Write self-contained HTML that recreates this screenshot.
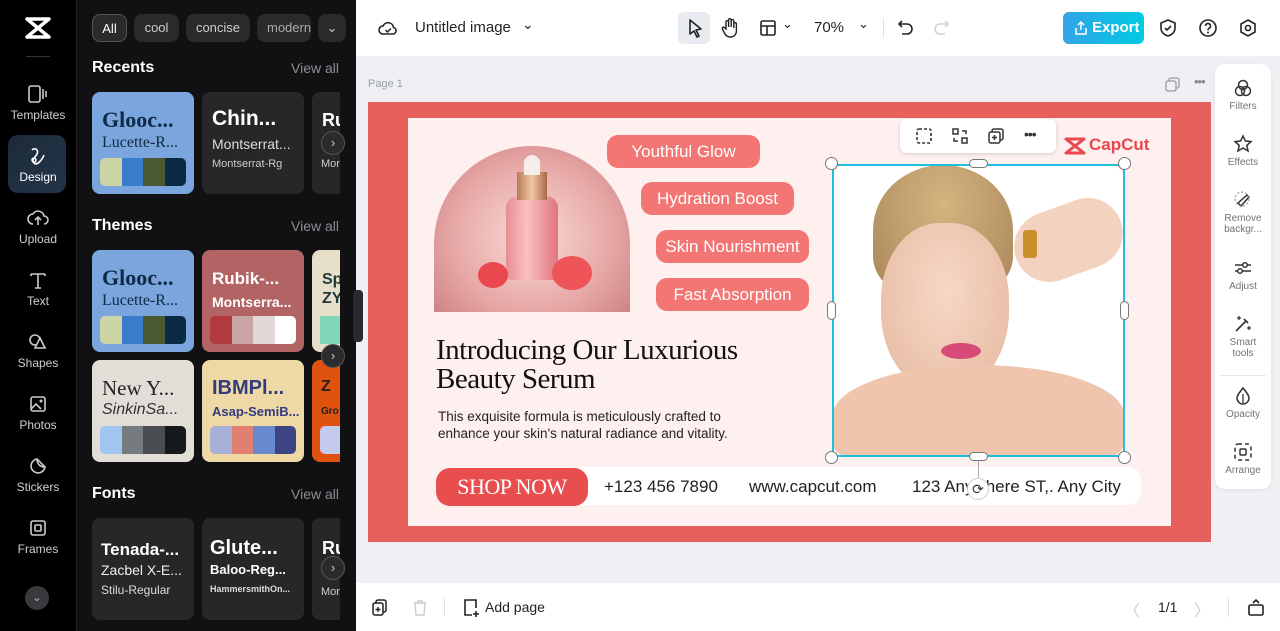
<!DOCTYPE html>
<html><head><meta charset="utf-8"><style>
*{box-sizing:border-box;margin:0;padding:0}
body{width:1280px;height:631px;overflow:hidden;font-family:"Liberation Sans",sans-serif;background:#eef0f3;position:relative}
.abs{position:absolute}
.nav{left:0;top:0;width:76px;height:631px;background:#000}
.navi{position:absolute;left:0;width:76px;text-align:center;color:#cfcfd2;font-size:12px}
.navi svg{display:block;margin:0 auto 4px}
.panel{left:76px;top:0;width:280px;height:631px;background:#111113;border-left:1px solid #222}
.chip{position:absolute;top:14px;height:28px;border-radius:8px;background:#2a2a2d;color:#cfcfd2;font-size:13px;line-height:28px;text-align:center}
.h{position:absolute;left:92px;color:#fff;font-weight:bold;font-size:16px}
.va{position:absolute;left:291px;color:#8d8d92;font-size:14px}
.card{position:absolute;width:102px;height:102px;border-radius:8px;overflow:hidden}
.pal{position:absolute;left:8px;top:66px;width:86px;height:28px;border-radius:5px;overflow:hidden;display:flex}
.pal i{flex:1}
.arr{position:absolute;left:321px;width:24px;height:24px;border-radius:50%;background:#2b2b2e;border:1px solid #555;color:#ccc;font-size:13px;text-align:center;line-height:22px}
.top{left:356px;top:0;width:924px;height:56px;background:#fff}
.bot{left:356px;top:583px;width:924px;height:48px;background:#fff}
.tag{position:absolute;height:33px;border-radius:11px;background:#f37574;color:#fff;font-size:17px;line-height:33px;text-align:center}
.rt{position:absolute;left:0;width:56px;text-align:center;color:#70737a;font-size:10px;line-height:11px}
.rt svg{display:block;margin:0 auto 3px}
.h1{font-family:"Liberation Serif",serif}
</style></head><body>
<div class="abs nav">
 <svg class="abs" style="left:24px;top:16px" width="28" height="24" viewBox="0 0 28 24"><path d="M3 3h22l-11 9zM3 21h22l-11-9z" fill="none" stroke="#fff" stroke-width="3.5" stroke-linejoin="round"/></svg>
 <div class="abs" style="left:26px;top:56px;width:24px;height:1px;background:#333"></div>
 <div class="navi" style="top:84px"><svg width="22" height="20" viewBox="0 0 22 20"><rect x="2" y="2" width="11" height="16" rx="2" fill="none" stroke="#ccc" stroke-width="1.6"/><path d="M16 5v10M19 7v6" stroke="#ccc" stroke-width="1.6"/></svg>Templates</div>
 <div class="abs" style="left:8px;top:135px;width:58px;height:58px;border-radius:10px;background:linear-gradient(135deg,#1c2a3a,#243548)"></div>
 <div class="navi" style="top:146px;color:#fff"><svg width="20" height="20" viewBox="0 0 20 20"><path d="M4 4c3-3 7 0 5 4s-6 6-3 9 8-3 10-8" fill="none" stroke="#fff" stroke-width="1.6"/><circle cx="6" cy="14" r="2" fill="none" stroke="#fff" stroke-width="1.5"/></svg>Design</div>
 <div class="navi" style="top:208px"><svg width="22" height="20" viewBox="0 0 22 20"><path d="M6 16a5 5 0 010-10 6 6 0 0111 2 4 4 0 010 8M11 17v-7M8 12l3-3 3 3" fill="none" stroke="#ccc" stroke-width="1.6"/></svg>Upload</div>
 <div class="navi" style="top:270px"><svg width="20" height="20" viewBox="0 0 20 20"><path d="M3 4h14M10 4v14M3 4v2M17 4v2M7 18h6" fill="none" stroke="#ccc" stroke-width="1.6"/></svg>Text</div>
 <div class="navi" style="top:332px"><svg width="22" height="20" viewBox="0 0 22 20"><circle cx="8" cy="8" r="5" fill="none" stroke="#ccc" stroke-width="1.6"/><path d="M13 6l5 10H8z" fill="#000" stroke="#ccc" stroke-width="1.6"/></svg>Shapes</div>
 <div class="navi" style="top:394px"><svg width="20" height="20" viewBox="0 0 20 20"><rect x="3" y="3" width="14" height="14" rx="2" fill="none" stroke="#ccc" stroke-width="1.6"/><path d="M3 15l5-5 5 5" fill="none" stroke="#ccc" stroke-width="1.6"/><circle cx="13" cy="7" r="1.5" fill="#ccc"/></svg>Photos</div>
 <div class="navi" style="top:456px"><svg width="20" height="20" viewBox="0 0 20 20"><path d="M17 11a7 7 0 11-8-8c0 5 3 8 8 8zM9 3l8 8" fill="none" stroke="#ccc" stroke-width="1.6"/></svg>Stickers</div>
 <div class="navi" style="top:518px"><svg width="20" height="20" viewBox="0 0 20 20"><rect x="3" y="3" width="14" height="14" rx="2" fill="none" stroke="#ccc" stroke-width="1.6"/><rect x="7" y="7" width="6" height="6" rx="1" fill="none" stroke="#ccc" stroke-width="1.6"/></svg>Frames</div>
 <div class="abs" style="left:25px;top:586px;width:24px;height:24px;border-radius:50%;background:#3a3a3e;color:#bbb;font-size:11px;text-align:center;line-height:24px">⌄</div>
</div>
<div class="abs panel"></div>
<div class="chip" style="left:92px;width:35px;border:1px solid #555;color:#fff">All</div>
<div class="chip" style="left:134px;width:45px">cool</div>
<div class="chip" style="left:186px;width:64px">concise</div>
<div class="chip" style="left:257px;width:54px;overflow:hidden;text-align:left;padding-left:10px;color:#aaa">modern</div>
<div class="chip" style="left:318px;width:28px;color:#ccc">⌄</div>
<div class="h" style="top:59px">Recents</div><div class="va" style="top:60px">View all</div>
<div class="h" style="top:217px">Themes</div><div class="va" style="top:218px">View all</div>
<div class="h" style="top:485px">Fonts</div><div class="va" style="top:486px">View all</div>
<!-- recents -->
<div class="card" style="left:92px;top:92px;background:#7aa5dd"><div class="h1" style="position:absolute;left:10px;top:15px;font-size:22px;font-weight:bold;color:#0f2a45">Glooc...</div><div class="h1" style="position:absolute;left:10px;top:42px;font-size:16px;color:#0f2a45">Lucette-R...</div><div class="pal"><i style="background:#cdd4a6"></i><i style="background:#3b7bcb"></i><i style="background:#4a5a30"></i><i style="background:#0b2a44"></i></div></div>
<div class="card" style="left:202px;top:92px;background:#27272a"><div style="position:absolute;left:10px;top:15px;font-size:21px;font-weight:bold;color:#fff">Chin...</div><div style="position:absolute;left:10px;top:44px;font-size:14px;color:#ddd">Montserrat...</div><div style="position:absolute;left:10px;top:66px;font-size:11px;color:#ccc">Montserrat-Rg</div></div>
<div class="card" style="left:312px;top:92px;width:28px;background:#27272a;border-radius:8px 0 0 8px"><div style="position:absolute;left:10px;top:18px;font-size:18px;font-weight:bold;color:#fff">Ru</div><div style="position:absolute;left:9px;top:66px;font-size:11px;color:#ccc">Mor</div></div>
<div class="arr" style="top:131px">›</div>
<!-- themes -->
<div class="card" style="left:92px;top:250px;background:#7aa5dd"><div class="h1" style="position:absolute;left:10px;top:15px;font-size:22px;font-weight:bold;color:#0f2a45">Glooc...</div><div class="h1" style="position:absolute;left:10px;top:42px;font-size:16px;color:#0f2a45">Lucette-R...</div><div class="pal"><i style="background:#cdd4a6"></i><i style="background:#3b7bcb"></i><i style="background:#4a5a30"></i><i style="background:#0b2a44"></i></div></div>
<div class="card" style="left:202px;top:250px;background:#b26464"><div style="position:absolute;left:10px;top:19px;font-size:17px;font-weight:bold;color:#fff">Rubik-...</div><div style="position:absolute;left:10px;top:44px;font-size:14px;font-weight:bold;color:#fff">Montserra...</div><div class="pal"><i style="background:#b03a3d"></i><i style="background:#c9a5a5"></i><i style="background:#e2d8d8"></i><i style="background:#fff"></i></div></div>
<div class="card" style="left:312px;top:250px;width:28px;background:#e8dfca;border-radius:8px 0 0 8px"><div style="position:absolute;left:10px;top:20px;font-size:16px;font-weight:bold;color:#1e3a3a;line-height:19px">Sp<br>ZY</div><div style="position:absolute;left:8px;top:66px;width:20px;height:28px;background:#80d8b8"></div></div>
<div class="card" style="left:92px;top:360px;background:#e2ddd7"><div class="h1" style="position:absolute;left:10px;top:16px;font-size:21px;color:#222">New Y...</div><div style="position:absolute;left:10px;top:41px;font-size:16px;font-style:italic;color:#333">SinkinSa...</div><div class="pal"><i style="background:#a0c5ef"></i><i style="background:#767b80"></i><i style="background:#4a4d52"></i><i style="background:#16181b"></i></div></div>
<div class="card" style="left:202px;top:360px;background:#eed8a6"><div style="position:absolute;left:10px;top:17px;font-size:20px;font-weight:bold;color:#323b80">IBMPl...</div><div style="position:absolute;left:10px;top:44px;font-size:13px;font-weight:bold;color:#323b80">Asap-SemiB...</div><div class="pal"><i style="background:#a9b0d8"></i><i style="background:#df8070"></i><i style="background:#6689cf"></i><i style="background:#3c4482"></i></div></div>
<div class="card" style="left:312px;top:360px;width:28px;background:#e0530f;border-radius:8px 0 0 8px"><div style="position:absolute;left:9px;top:18px;font-size:16px;font-weight:bold;color:#222">Z</div><div style="position:absolute;left:9px;top:46px;font-size:10px;font-weight:bold;color:#222">Gro</div><div style="position:absolute;left:8px;top:66px;width:20px;height:28px;background:#c5cbef;border-radius:5px 0 0 5px"></div></div>
<div class="arr" style="top:344px">›</div>
<!-- fonts -->
<div class="card" style="left:92px;top:518px;background:#27272a"><div style="position:absolute;left:9px;top:22px;font-size:17px;font-weight:bold;color:#fff">Tenada-...</div><div style="position:absolute;left:9px;top:44px;font-size:14px;color:#eee">Zacbel X-E...</div><div style="position:absolute;left:9px;top:65px;font-size:12px;color:#ddd">Stilu-Regular</div></div>
<div class="card" style="left:202px;top:518px;background:#27272a"><div style="position:absolute;left:8px;top:19px;font-size:20px;font-weight:bold;color:#fff">Glute...</div><div style="position:absolute;left:8px;top:44px;font-size:13px;font-weight:bold;color:#fff">Baloo-Reg...</div><div style="position:absolute;left:8px;top:66px;font-size:9px;font-weight:bold;color:#ddd">HammersmithOn...</div></div>
<div class="card" style="left:312px;top:518px;width:28px;background:#27272a;border-radius:8px 0 0 8px"><div style="position:absolute;left:10px;top:20px;font-size:18px;font-weight:bold;color:#fff">Ru</div><div style="position:absolute;left:9px;top:68px;font-size:11px;color:#ccc">Mor</div></div>
<div class="arr" style="top:556px">›</div>
<div class="abs" style="left:353px;top:290px;width:10px;height:52px;border-radius:4px;background:#2a2a2d"></div>
<!-- top bar -->
<div class="abs top">
 <svg class="abs" style="left:22px;top:18px" width="20" height="20" viewBox="0 0 20 20"><path d="M5 16a4 4 0 010-8 5.5 5.5 0 0110.5 1.5A3.3 3.3 0 0115 16z" fill="none" stroke="#222" stroke-width="1.6"/><path d="M7.5 12l2 2 3.5-3.5" fill="none" stroke="#222" stroke-width="1.5"/></svg>
 <div class="abs" style="left:59px;top:19px;font-size:15px;color:#222">Untitled image</div>
 <div class="abs" style="left:166px;top:16px;font-size:14px;color:#222">⌄</div>
 <div class="abs" style="left:322px;top:12px;width:32px;height:32px;border-radius:6px;background:#e8ebef"></div>
 <svg class="abs" style="left:330px;top:18px" width="18" height="20" viewBox="0 0 18 20"><path d="M4 2l11 9-5 1 3 6-2 1-3-6-4 3z" fill="none" stroke="#222" stroke-width="1.6" stroke-linejoin="round"/></svg>
 <svg class="abs" style="left:364px;top:17px" width="20" height="22" viewBox="0 0 20 22"><path d="M6 12V5a1.3 1.3 0 012.6 0v5-7a1.3 1.3 0 012.6 0v7-6a1.3 1.3 0 012.6 0v7-4a1.3 1.3 0 012.6 0v7c0 4-3 6-6 6s-5-2-6-4l-2-4a1.3 1.3 0 012.4-1z" fill="none" stroke="#222" stroke-width="1.4"/></svg>
 <svg class="abs" style="left:403px;top:19px" width="18" height="18" viewBox="0 0 18 18"><rect x="2" y="2" width="14" height="14" rx="1.5" fill="none" stroke="#222" stroke-width="1.6"/><path d="M2 7h14M8 7v9" stroke="#222" stroke-width="1.6"/></svg>
 <div class="abs" style="left:426px;top:16px;font-size:13px;color:#222">⌄</div>
 <div class="abs" style="left:458px;top:19px;font-size:15px;color:#222">70%</div>
 <div class="abs" style="left:502px;top:16px;font-size:13px;color:#222">⌄</div>
 <div class="abs" style="left:527px;top:18px;width:1px;height:20px;background:#e2e2e2"></div>
 <svg class="abs" style="left:541px;top:18px" width="18" height="20" viewBox="0 0 18 20"><path d="M5 3L2 6l3 3M2 6h8a5 5 0 010 10H5" fill="none" stroke="#222" stroke-width="1.6"/></svg>
 <svg class="abs" style="left:576px;top:18px" width="18" height="20" viewBox="0 0 18 20"><path d="M13 3l3 3-3 3M16 6H8a5 5 0 000 10h5" fill="none" stroke="#cfd2d6" stroke-width="1.6"/></svg>
 <div class="abs" style="left:707px;top:12px;width:81px;height:32px;border-radius:6px;background:linear-gradient(90deg,#34a3ea,#00cbe0);color:#fff;font-size:15px;font-weight:bold;line-height:32px;padding-left:29px">Export</div>
 <svg class="abs" style="left:718px;top:20px" width="14" height="16" viewBox="0 0 14 16"><path d="M7 10V2M4 5l3-3 3 3M2 8v6h10V8" fill="none" stroke="#fff" stroke-width="1.5"/></svg>
 <svg class="abs" style="left:802px;top:18px" width="20" height="20" viewBox="0 0 20 20"><path d="M10 2l7 3v5c0 4-3 7-7 8-4-1-7-4-7-8V5z" fill="none" stroke="#222" stroke-width="1.6"/><path d="M7 10l2 2 4-4" fill="none" stroke="#222" stroke-width="1.6"/></svg>
 <svg class="abs" style="left:842px;top:18px" width="20" height="20" viewBox="0 0 20 20"><circle cx="10" cy="10" r="8" fill="none" stroke="#222" stroke-width="1.6"/><path d="M7.5 8a2.5 2.5 0 114 2c-1 .6-1.5 1-1.5 2.2" fill="none" stroke="#222" stroke-width="1.6"/><circle cx="10" cy="14.5" r="1" fill="#222"/></svg>
 <svg class="abs" style="left:882px;top:18px" width="20" height="20" viewBox="0 0 20 20"><path d="M10 2l7 4v8l-7 4-7-4V6z" fill="none" stroke="#222" stroke-width="1.6"/><circle cx="10" cy="10" r="2.5" fill="none" stroke="#222" stroke-width="1.6"/></svg>
</div>
<div class="abs" style="left:368px;top:78px;font-size:11px;color:#9a9ea5">Page 1</div>
<svg class="abs" style="left:1165px;top:77px" width="15" height="15" viewBox="0 0 15 15"><rect x="4" y="1" width="10" height="10" rx="2" fill="none" stroke="#999" stroke-width="1.3"/><rect x="1" y="4" width="10" height="10" rx="2" fill="#eef0f3" stroke="#999" stroke-width="1.3"/></svg>
<div class="abs" style="left:1194px;top:74px;font-size:13px;color:#888;letter-spacing:-1px">•••</div>
<!-- design -->
<div class="abs" style="left:368px;top:102px;width:843px;height:440px;background:#e8605c"></div>
<div class="abs" style="left:408px;top:118px;width:763px;height:408px;background:#fdf0ee"></div>
<div class="abs" style="left:434px;top:146px;width:196px;height:166px;border-radius:98px 98px 0 0;background:radial-gradient(ellipse at 50% 55%,#f6dcd8 0%,#e8aaa8 55%,#c87a7c 100%)"></div>
<div class="abs" style="left:506px;top:196px;width:52px;height:84px;border-radius:12px 12px 6px 6px;background:linear-gradient(90deg,#e88a90,#f9c0c2 40%,#e0707a);opacity:.95"></div>
<div class="abs" style="left:517px;top:172px;width:30px;height:28px;background:linear-gradient(90deg,#b57a55,#f1c9a4,#a86845)"></div>
<div class="abs" style="left:524px;top:155px;width:16px;height:20px;border-radius:8px 8px 0 0;background:#f5ede9"></div>
<div class="abs" style="left:478px;top:262px;width:30px;height:26px;border-radius:50%;background:#e8484e"></div>
<div class="abs" style="left:552px;top:256px;width:40px;height:34px;border-radius:50%;background:#ee5458"></div>
<div class="tag" style="left:607px;top:135px;width:153px">Youthful Glow</div>
<div class="tag" style="left:641px;top:182px;width:153px">Hydration Boost</div>
<div class="tag" style="left:656px;top:230px;width:153px">Skin Nourishment</div>
<div class="tag" style="left:656px;top:278px;width:153px">Fast Absorption</div>
<div class="abs h1" style="left:436px;top:336px;font-size:29px;line-height:29px;color:#111;letter-spacing:-.5px">Introducing Our Luxurious<br>Beauty Serum</div>
<div class="abs" style="left:438px;top:408px;font-size:13.5px;line-height:17px;color:#222">This exquisite formula is meticulously crafted to<br>enhance your skin's natural radiance and vitality.</div>
<div class="abs" style="left:580px;top:467px;width:561px;height:38px;border-radius:0 12px 12px 0;background:#fff"></div>
<div class="abs h1" style="left:436px;top:468px;width:152px;height:38px;border-radius:14px;background:#e84e4e;color:#fff;font-size:22px;line-height:38px;text-align:center;letter-spacing:-.5px">SHOP NOW</div>
<div class="abs" style="left:604px;top:477px;font-size:17px;color:#222">+123 456 7890</div>
<div class="abs" style="left:749px;top:477px;font-size:17px;color:#222">www.capcut.com</div>
<div class="abs" style="left:912px;top:477px;font-size:17px;color:#222">123 Anywhere ST,. Any City</div>
<!-- photo -->
<div class="abs" style="left:833px;top:165px;width:291px;height:291px;border-radius:14px;background:#fff;overflow:hidden">
 <div class="abs" style="left:40px;top:0;width:140px;height:130px;border-radius:50% 50% 30% 30%;background:radial-gradient(ellipse at 50% 30%,#d6b480,#a8865a)"></div>
 <div class="abs" style="left:48px;top:58px;width:128px;height:170px;border-radius:45% 45% 48% 48%;background:radial-gradient(ellipse at 50% 40%,#f6d8c6,#e6b89e)"></div>
 <div class="abs" style="left:0;top:200px;width:291px;height:100px;border-radius:50% 50% 0 0;background:#efc5ae"></div>
 <div class="abs" style="left:108px;top:178px;width:40px;height:16px;border-radius:50%;background:#d84a78"></div>
 <div class="abs" style="left:180px;top:40px;width:111px;height:70px;border-radius:40px;background:#f3d2c0;transform:rotate(-20deg)"></div>
 <div class="abs" style="left:190px;top:65px;width:14px;height:28px;background:#c9912a;border-radius:3px"></div>
</div>
<div class="abs" style="left:832px;top:164px;width:293px;height:293px;border:2px solid #1ec0dc"></div>
<div class="abs" style="left:825px;top:157px;width:13px;height:13px;border-radius:50%;background:#fff;border:1px solid #777"></div>
<div class="abs" style="left:1118px;top:157px;width:13px;height:13px;border-radius:50%;background:#fff;border:1px solid #777"></div>
<div class="abs" style="left:825px;top:451px;width:13px;height:13px;border-radius:50%;background:#fff;border:1px solid #777"></div>
<div class="abs" style="left:1118px;top:451px;width:13px;height:13px;border-radius:50%;background:#fff;border:1px solid #777"></div>
<div class="abs" style="left:969px;top:159px;width:19px;height:9px;border-radius:5px;background:#fff;border:1px solid #777"></div>
<div class="abs" style="left:969px;top:452px;width:19px;height:9px;border-radius:5px;background:#fff;border:1px solid #777"></div>
<div class="abs" style="left:827px;top:301px;width:9px;height:19px;border-radius:5px;background:#fff;border:1px solid #777"></div>
<div class="abs" style="left:1120px;top:301px;width:9px;height:19px;border-radius:5px;background:#fff;border:1px solid #777"></div>
<div class="abs" style="left:978px;top:461px;width:1px;height:18px;background:#aaa"></div>
<div class="abs" style="left:967px;top:478px;width:22px;height:22px;border-radius:50%;background:#fff;border:1px solid #ccc;font-size:14px;text-align:center;line-height:20px;color:#333">⟳</div>
<div class="abs" style="left:900px;top:119px;width:156px;height:34px;border-radius:7px;background:#fff;box-shadow:0 1px 4px rgba(0,0,0,.15)"></div>
<svg class="abs" style="left:915px;top:127px" width="18" height="18" viewBox="0 0 18 18"><rect x="2" y="2" width="14" height="14" rx="2" fill="none" stroke="#333" stroke-width="1.6" stroke-dasharray="3 2"/></svg>
<svg class="abs" style="left:951px;top:127px" width="18" height="18" viewBox="0 0 18 18"><rect x="2" y="2" width="5" height="5" fill="none" stroke="#333" stroke-width="1.5"/><rect x="11" y="11" width="5" height="5" fill="none" stroke="#333" stroke-width="1.5"/><path d="M11 4h4v3M7 14H3v-3" fill="none" stroke="#333" stroke-width="1.5"/></svg>
<svg class="abs" style="left:987px;top:127px" width="18" height="18" viewBox="0 0 18 18"><rect x="5" y="2" width="11" height="11" rx="2" fill="none" stroke="#333" stroke-width="1.5"/><rect x="2" y="5" width="11" height="11" rx="2" fill="#fff" stroke="#333" stroke-width="1.5"/><path d="M7.5 8v5M5 10.5h5" stroke="#333" stroke-width="1.5"/></svg>
<div class="abs" style="left:1024px;top:126px;font-size:14px;color:#333;letter-spacing:-1px">•••</div>
<svg class="abs" style="left:1064px;top:137px" width="22" height="18" viewBox="0 0 22 18"><path d="M2 2h18L11 9zM2 16h18L11 9z" fill="none" stroke="#e8484e" stroke-width="3" stroke-linejoin="round"/></svg>
<div class="abs" style="left:1089px;top:135px;font-size:17px;font-weight:bold;color:#e8484e">CapCut</div>
<!-- right toolbar -->
<div class="abs" style="left:1215px;top:64px;width:56px;height:425px;border-radius:10px;background:#fff;box-shadow:0 1px 4px rgba(0,0,0,.06)">
 <div class="rt" style="top:14px"><svg width="20" height="20" viewBox="0 0 20 20"><circle cx="10" cy="7" r="4.5" fill="none" stroke="#333" stroke-width="1.5"/><circle cx="7" cy="13" r="4.5" fill="none" stroke="#333" stroke-width="1.5"/><circle cx="13" cy="13" r="4.5" fill="none" stroke="#333" stroke-width="1.5"/></svg>Filters</div>
 <div class="rt" style="top:70px"><svg width="20" height="20" viewBox="0 0 20 20"><path d="M10 2l2.4 5 5.6.6-4.2 3.8 1.2 5.6L10 14l-5 3 1.2-5.6L2 7.6 7.6 7z" fill="none" stroke="#333" stroke-width="1.5"/></svg>Effects</div>
 <div class="rt" style="top:126px"><svg width="20" height="20" viewBox="0 0 20 20"><path d="M8 16l8-9-2-2-9 8z" fill="none" stroke="#333" stroke-width="1.5"/><circle cx="9" cy="9" r="7" fill="none" stroke="#999" stroke-width="1.2" stroke-dasharray="2 2"/></svg>Remove<br>backgr...</div>
 <div class="rt" style="top:194px"><svg width="20" height="20" viewBox="0 0 20 20"><path d="M2 7h16M2 13h16" stroke="#333" stroke-width="1.5"/><circle cx="12" cy="7" r="2.3" fill="#fff" stroke="#333" stroke-width="1.5"/><circle cx="7" cy="13" r="2.3" fill="#fff" stroke="#333" stroke-width="1.5"/></svg>Adjust</div>
 <div class="rt" style="top:250px"><svg width="20" height="20" viewBox="0 0 20 20"><path d="M3 17l10-10M11 5l4 4" stroke="#333" stroke-width="1.6"/><path d="M6 2v4M4 4h4M16 12v4M14 14h4" stroke="#333" stroke-width="1.3"/></svg>Smart<br>tools</div>
 <div class="abs" style="left:5px;top:311px;width:46px;height:1px;background:#e6e6e6"></div>
 <div class="rt" style="top:322px"><svg width="20" height="20" viewBox="0 0 20 20"><path d="M10 2c3 4 6 7 6 10a6 6 0 01-12 0c0-3 3-6 6-10z" fill="none" stroke="#333" stroke-width="1.5"/><path d="M10 8v9" stroke="#333" stroke-width="1.3"/></svg>Opacity</div>
 <div class="rt" style="top:378px"><svg width="20" height="20" viewBox="0 0 20 20"><rect x="2" y="2" width="16" height="16" rx="3" fill="none" stroke="#333" stroke-width="1.5" stroke-dasharray="4 3"/><rect x="7" y="7" width="6" height="6" rx="1" fill="none" stroke="#333" stroke-width="1.5"/></svg>Arrange</div>
</div>
<!-- bottom -->
<div class="abs bot">
 <svg class="abs" style="left:16px;top:16px" width="16" height="18" viewBox="0 0 16 18"><rect x="4" y="1" width="10" height="12" rx="2" fill="none" stroke="#222" stroke-width="1.5"/><rect x="1" y="4" width="10" height="12" rx="2" fill="#fff" stroke="#222" stroke-width="1.5"/><path d="M6 8v5M3.5 10.5h5" stroke="#222" stroke-width="1.4"/></svg>
 <svg class="abs" style="left:56px;top:16px" width="16" height="18" viewBox="0 0 16 18"><path d="M2 4h12M6 4V2h4v2M3 4l1 12h8l1-12" fill="none" stroke="#ccc" stroke-width="1.4"/></svg>
 <div class="abs" style="left:88px;top:15px;width:1px;height:18px;background:#e2e2e2"></div>
 <svg class="abs" style="left:106px;top:15px" width="18" height="20" viewBox="0 0 18 20"><path d="M10 17H3V2h11v8" fill="none" stroke="#222" stroke-width="1.6"/><path d="M14 13v6M11 16h6" stroke="#222" stroke-width="1.6"/></svg>
 <div class="abs" style="left:129px;top:16px;font-size:14px;color:#222">Add page</div>
 <div class="abs" style="left:768px;top:14px;font-size:16px;color:#ccc">〈</div>
 <div class="abs" style="left:802px;top:16px;font-size:14px;color:#222">1/1</div>
 <div class="abs" style="left:838px;top:14px;font-size:16px;color:#ccc">〉</div>
 <div class="abs" style="left:872px;top:14px;width:1px;height:20px;background:#e2e2e2"></div>
 <svg class="abs" style="left:891px;top:15px" width="18" height="18" viewBox="0 0 18 18"><rect x="2" y="7" width="14" height="10" rx="1.5" fill="none" stroke="#222" stroke-width="1.6"/><path d="M6 5l3-3 3 3" fill="none" stroke="#222" stroke-width="1.6"/></svg>
</div>
</body></html>
